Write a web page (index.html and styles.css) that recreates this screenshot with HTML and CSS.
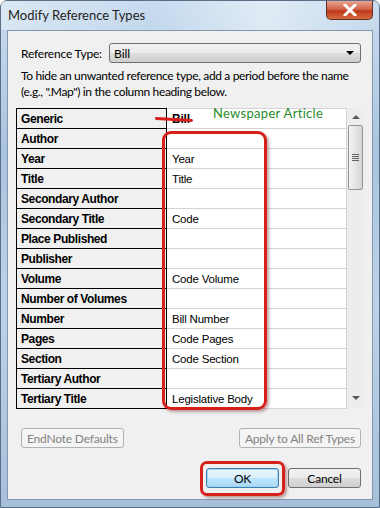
FILE: index.html
```html
<!DOCTYPE html>
<html lang="en">
<head>
    <meta charset="UTF-8">
    <title>Modify Reference Types</title>
    <link rel="stylesheet" href="styles.css">
</head>
<body>

    <div class="window">
        <div class="titlebar">
            <span class="title">Modify Reference Types</span>
            <div class="close-btn">
                <svg width="14" height="12" viewBox="0 0 14 12">
                    <path d="M2 1 L12 11 M12 1 L2 11" stroke="#fff" stroke-width="3" stroke-linecap="square"/>
                </svg>
            </div>
        </div>

        <div class="client">
            <div class="type-row">
                <label>Reference Type:</label>
                <div class="combo">
                    <span>Bill</span>
                    <span class="combo-arrow"></span>
                </div>
            </div>

            <p class="help">To hide an unwanted reference type, add a period before the name<br>(e.g., ".Map") in the column heading below.</p>

            <div class="grid-wrap">
                <table class="fields">
                    <tbody id="fieldRows">
                        <!-- rows filled in by script -->
                    </tbody>
                </table>
                <div class="scrollbar">
                    <span class="arrow up"></span>
                    <div class="thumb">
                        <span class="grip"></span>
                        <span class="grip"></span>
                        <span class="grip"></span>
                        <span class="grip"></span>
                    </div>
                    <span class="arrow down"></span>
                </div>
            </div>

            <div class="btn-row">
                <button class="btn disabled">EndNote Defaults</button>
                <button class="btn disabled">Apply to All Ref Types</button>
            </div>

            <div class="btn-row end">
                <button class="btn default">OK</button>
                <button class="btn">Cancel</button>
            </div>
        </div>

        <!-- red markup drawn over the screenshot -->
        <div class="note-arrow"></div>
        <div class="note-text">Newspaper Article</div>
        <div class="note-box values-box"></div>
        <div class="note-box ok-box"></div>
    </div>

    <script>
        const fields = [
            ['Generic', 'Bill'],
            ['Author', ''],
            ['Year', 'Year'],
            ['Title', 'Title'],
            ['Secondary Author', ''],
            ['Secondary Title', 'Code'],
            ['Place Published', ''],
            ['Publisher', ''],
            ['Volume', 'Code Volume'],
            ['Number of Volumes', ''],
            ['Number', 'Bill Number'],
            ['Pages', 'Code Pages'],
            ['Section', 'Code Section'],
            ['Tertiary Author', ''],
            ['Tertiary Title', 'Legislative Body']
        ];

        const fieldRows = document.getElementById('fieldRows');

        fields.forEach((pair, index) => {
            const row = document.createElement('tr');
            row.innerHTML = `
                <th>${pair[0]}</th>
                <td class="${index === 0 ? 'head' : ''}">${pair[1]}</td>
            `;
            fieldRows.appendChild(row);
        });
    </script>

</body>
</html>
```

FILE: styles.css
```css
body {
    margin: 0;
    font-family: Lato, "Open Sans", sans-serif;
    font-size: 12px;
    color: #000;
    background: #fff;
}

.window {
    position: relative;
    width: 380px;
    height: 508px;
    box-sizing: border-box;
    padding: 0 6px 7px 6px;
    display: flex;
    flex-direction: column;
    background: linear-gradient(180deg, #c9dcee 0%, #a9c4e0 30%, #bcd2e8 60%, #a6c0dc 100%);
    border: 1px solid #5a6f87;
    border-radius: 7px 7px 0 0;
}

.titlebar {
    height: 29px;
    display: flex;
    justify-content: space-between;
    align-items: flex-start;
    background: linear-gradient(90deg, rgba(255,255,255,0.35), rgba(190,215,240,0.2) 40%, rgba(255,255,255,0.45) 70%, rgba(200,220,240,0.3));
    margin: 0 -6px;
    padding: 0 6px 0 7px;
}

.title {
    margin-top: 6px;
    font-size: 13px;
    color: #1e1e1e;
}

.close-btn {
    width: 45px;
    height: 18px;
    display: flex;
    align-items: center;
    justify-content: center;
    background: linear-gradient(180deg, #e8a493 0%, #d2664c 45%, #c0391c 55%, #d66a3e 100%);
    border: 1px solid #5a3026;
    border-top: none;
    border-radius: 0 0 5px 5px;
}

.client {
    flex: 1;
    background-color: #f0f0f0;
    border: 1px solid #8497ad;
    padding: 0 8px;
}

.type-row {
    display: flex;
    align-items: center;
    margin-top: 12px;
    padding: 0 3px 0 5px;
}

.type-row label {
    width: 88px;
    letter-spacing: -0.2px;
}

.combo {
    flex: 1;
    height: 18px;
    border: 1px solid #707070;
    border-radius: 3px;
    background: linear-gradient(180deg, #f2f2f2 0%, #ebebeb 50%, #dddddd 51%, #cfcfcf 100%);
    display: flex;
    align-items: center;
    justify-content: space-between;
    padding: 0 6px 0 4px;
}

.combo-arrow {
    width: 0;
    height: 0;
    border-left: 4px solid transparent;
    border-right: 4px solid transparent;
    border-top: 4px solid #000;
}

.help {
    margin: 5px 0 8px 0;
    padding-left: 5px;
    line-height: 16px;
    white-space: nowrap;
    letter-spacing: -0.35px;
}

.grid-wrap {
    display: flex;
    height: 300px;
}

.fields {
    border-collapse: collapse;
    width: 332px;
    background: #fff;
    font-family: "Liberation Sans", Arial, sans-serif;
    font-size: 12px;
}

.fields th {
    width: 145px;
    height: 19px;
    padding: 0 0 0 4px;
    text-align: left;
    background-color: #f0f0f0;
    border: 1px solid #000;
    letter-spacing: -0.4px;
}

.fields td {
    padding: 0 0 0 5px;
    font-size: 11.5px;
    letter-spacing: -0.2px;
    border-top: 1px solid #d4d4d4;
    border-bottom: 1px solid #d4d4d4;
    border-right: 1px solid #d4d4d4;
}

.fields td.head {
    font-size: 12px;
    font-weight: bold;
}

.scrollbar {
    width: 17px;
    height: 300px;
    background: #ededed;
    display: flex;
    flex-direction: column;
    align-items: center;
}

.arrow {
    width: 0;
    height: 0;
    border-left: 4px solid transparent;
    border-right: 4px solid transparent;
    margin: 7px 0;
}

.arrow.up {
    border-bottom: 4px solid #5a5a5a;
}

.arrow.down {
    border-top: 4px solid #5a5a5a;
    margin-top: auto;
    margin-bottom: 8px;
}

.thumb {
    width: 13px;
    height: 63px;
    margin-top: -1px;
    border: 1px solid #959595;
    border-radius: 2px;
    background: linear-gradient(90deg, #f3f3f3, #e5e5e5 50%, #d5d5d5);
    display: flex;
    flex-direction: column;
    align-items: center;
    justify-content: center;
    gap: 1px;
}

.grip {
    width: 7px;
    height: 1px;
    background: #666;
}

.btn-row {
    display: flex;
    justify-content: space-between;
    margin-top: 20px;
    padding: 0 3px 0 5px;
}

.btn-row.end {
    justify-content: flex-end;
    gap: 9px;
}

.btn {
    height: 20px;
    padding: 0 5px;
    font-family: Lato, sans-serif;
    font-size: 12px;
    letter-spacing: -0.2px;
    border: 1px solid #707070;
    border-radius: 3px;
    background: linear-gradient(180deg, #f2f2f2 0%, #ebebeb 50%, #dddddd 51%, #cfcfcf 100%);
    color: #000;
}

.btn.disabled {
    color: #838383;
    border-color: #adb2b5;
    background: #f4f4f4;
}

.btn-row.end .btn {
    width: 73px;
}

.btn.default {
    border-color: #3c7fb1;
    box-shadow: inset 0 0 0 1px #a3d3ef;
    background: linear-gradient(180deg, #eaf6fd 0%, #d9f0fc 50%, #bee6fd 51%, #a7d9f5 100%);
}

.note-arrow {
    position: absolute;
    left: 154px;
    top: 117px;
    width: 38px;
    height: 3px;
    background: #d8201c;
    border-radius: 2px;
    transform: rotate(3deg);
}

.note-text {
    position: absolute;
    left: 212px;
    top: 104px;
    font-family: Lato, sans-serif;
    font-size: 13px;
    letter-spacing: 0.3px;
    color: #2b8a2b;
}

.note-box {
    position: absolute;
    border: 3px solid #d6201c;
    box-shadow: 2px 2px 3px rgba(80, 0, 0, 0.35);
}

.values-box {
    left: 161px;
    top: 130px;
    width: 99px;
    height: 273px;
    border-radius: 9px;
}

.ok-box {
    left: 199px;
    top: 460px;
    width: 79px;
    height: 29px;
    border-radius: 7px;
}
```
